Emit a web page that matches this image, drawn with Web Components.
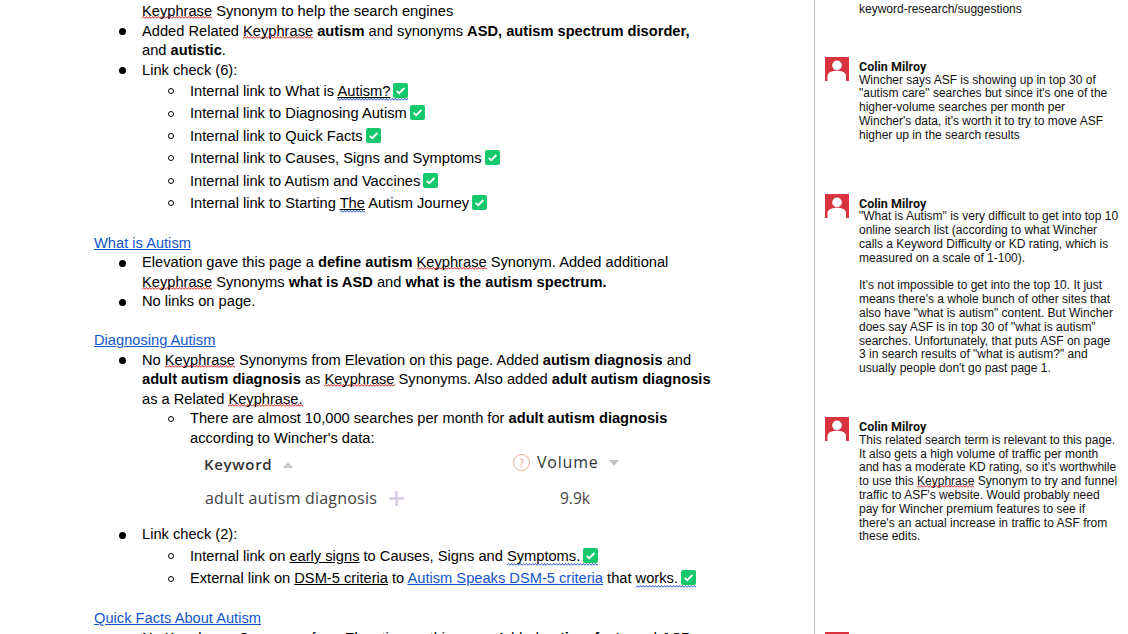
<!doctype html>
<html>
<head>
<meta charset="utf-8">
<title>Doc</title>
<style>
	html, body { margin: 0; height: 100%; overflow: hidden; background: #fff; }
	doc-section { margin-top: 19.5px; }
	doc-section:first-child { margin-top: 0; }
</style>
</head>
<body>
<review-page>
	<doc-section>
		<doc-item plain><spell-mark>Keyphrase</spell-mark> Synonym to help the search engines</doc-item>
		<doc-item>Added Related <spell-mark>Keyphrase</spell-mark> <b>autism</b> and synonyms <b>ASD, autism spectrum disorder,</b><br>and <b>autistic</b>.</doc-item>
		<doc-item>Link check (6):
			<doc-item tall sub>Internal link to What is <u-link><spell-mark kind="grammar">Autism?<check-mark></check-mark></spell-mark></u-link></doc-item>
			<doc-item tall sub>Internal link to Diagnosing Autism<check-mark></check-mark></doc-item>
			<doc-item tall sub>Internal link to Quick Facts<check-mark></check-mark></doc-item>
			<doc-item tall sub>Internal link to Causes, Signs and Symptoms<check-mark></check-mark></doc-item>
			<doc-item tall sub>Internal link to Autism and Vaccines<check-mark></check-mark></doc-item>
			<doc-item tall sub>Internal link to Starting <u-link><spell-mark kind="grammar">The</spell-mark></u-link> Autism Journey<check-mark></check-mark></doc-item>
		</doc-item>
	</doc-section>

	<doc-section heading="What is Autism">
		<doc-item>Elevation gave this page a <b>define autism</b> <spell-mark>Keyphrase</spell-mark> Synonym. Added additional<br><spell-mark>Keyphrase</spell-mark> Synonyms <b>what is ASD</b> and <b>what is the autism spectrum.</b></doc-item>
		<doc-item>No links on page.</doc-item>
	</doc-section>

	<doc-section heading="Diagnosing Autism">
		<doc-item>No <spell-mark>Keyphrase</spell-mark> Synonyms from Elevation on this page. Added <b>autism diagnosis</b> and<br><b>adult autism diagnosis</b> as <spell-mark>Keyphrase</spell-mark> Synonyms. Also added <b>adult autism diagnosis</b><br>as a Related <spell-mark>Keyphrase.</spell-mark>
			<doc-item sub>There are almost 10,000 searches per month for <b>adult autism diagnosis</b><br>according to Wincher's data:
				<keyword-table></keyword-table>
			</doc-item>
		</doc-item>
		<doc-item>Link check (2):
			<doc-item tall sub>Internal link on <u-link>early signs</u-link> to Causes, Signs and <spell-mark kind="grammar">Symptoms.<check-mark></check-mark></spell-mark></doc-item>
			<doc-item tall sub>External link on <u-link>DSM-5 criteria</u-link> to <u-link blue>Autism Speaks DSM-5 criteria</u-link> that <spell-mark kind="grammar">works.<check-mark></check-mark></spell-mark></doc-item>
		</doc-item>
	</doc-section>

	<doc-section heading="Quick Facts About Autism">
		<doc-item>No <spell-mark>Keyphrase</spell-mark> Synonyms from Elevation on this page. Added <b>autism facts</b> and <b>ASD</b></doc-item>
	</doc-section>

	<comment-card slot="comments" no-head style="margin-top:3px"><div>keyword-research/suggestions</div></comment-card>
	<comment-card slot="comments" name="Colin Milroy" style="margin-top:40px">Wincher says ASF is showing up in top 30 of<br>"autism care" searches but since it's one of the<br>higher-volume searches per month per<br>Wincher's data, it's worth it to try to move ASF<br>higher up in the search results</comment-card>
	<comment-card slot="comments" name="Colin Milroy" style="margin-top:51px">"What is Autism" is very difficult to get into top 10<br>online search list (according to what Wincher<br>calls a Keyword Difficulty or KD rating, which is<br>measured on a scale of 1-100).<br><br>It's not impossible to get into the top 10. It just<br>means there's a whole bunch of other sites that<br>also have "what is autism" content. But Wincher<br>does say ASF is in top 30 of "what is autism"<br>searches. Unfortunately, that puts ASF on page<br>3 in search results of "what is autism?" and<br>usually people don't go past page 1.</comment-card>
	<comment-card slot="comments" name="Colin Milroy" style="margin-top:41px">This related search term is relevant to this page.<br>It also gets a high volume of traffic per month<br>and has a moderate KD rating, so it's worthwhile<br>to use this <spell-mark>Keyphrase</spell-mark> Synonym to try and funnel<br>traffic to ASF's website. Would probably need<br>pay for Wincher premium features to see if<br>there's an actual increase in traffic to ASF from<br>these edits.</comment-card>
	<comment-card slot="comments" style="margin-top:88px"></comment-card>
</review-page>

<script>
const wave = color => `url("data:image/svg+xml,%3Csvg xmlns='http://www.w3.org/2000/svg' width='3' height='3'%3E%3Cpath d='M0 2.5L1.5 .5L3 2.5' fill='none' stroke='${color}' stroke-width='1'/%3E%3C/svg%3E")`

class ReviewPage extends HTMLElement {
	constructor() {
		super()
		this.attachShadow( { mode: 'open' } )
		this.shadowRoot.innerHTML = `
			<style>
				:host {
					display: grid;
					grid-template-columns: 814px 1fr;
					height: 634px;
					overflow: hidden;
					color: #000;
					font-family: "Liberation Sans", Arial, sans-serif;
				}
				.doc {
					padding: 2px 0 0 94px;
					font-size: 14.67px;
					overflow: hidden;
				}
				.rail {
					border-left: 1px solid #c2c2c2;
					padding: 0 0 0 10px;
					overflow: hidden;
				}
			</style>
			<div class="doc"><slot></slot></div>
			<div class="rail"><slot name="comments"></slot></div>
		`
	}
}

class DocSection extends HTMLElement {
	constructor() {
		super()
		this.attachShadow( { mode: 'open' } )
	}

	connectedCallback() {
		const heading = this.getAttribute( 'heading' )
		this.shadowRoot.innerHTML = `
			<style>
				:host { display: block; }
				.heading {
					line-height: 19.5px;
					color: #1155cc;
					text-decoration: underline;
				}
			</style>
			${ heading ? `<div class="heading">${heading}</div>` : '' }
			<slot></slot>
		`
	}
}

class DocItem extends HTMLElement {
	constructor() {
		super()
		this.attachShadow( { mode: 'open' } )
		this.shadowRoot.innerHTML = `
			<style>
				:host {
					--lh: 19.5px;
					display: grid;
					grid-template-columns: 48px 1fr;
					line-height: var(--lh);
				}
				:host([tall]) { --lh: 22.4px; }
				.mark {
					display: flex;
					align-items: center;
					height: var(--lh);
					padding-left: 25px;
				}
				.mark i {
					width: 7px;
					height: 7px;
					border-radius: 50%;
					background: #000;
				}
				:host([sub]) .mark i {
					width: 4px;
					height: 4px;
					margin-left: 1px;
					background: transparent;
					border: 1px solid #000;
				}
				:host([plain]) .mark i { visibility: hidden; }
			</style>
			<div class="mark"><i></i></div>
			<div><slot></slot></div>
		`
	}
}

class SpellMark extends HTMLElement {
	constructor() {
		super()
		this.attachShadow( { mode: 'open' } )
		// no whitespace around the slot, it would pick up the underline
		this.shadowRoot.innerHTML = `<style>
				:host {
					background: ${wave( '%23d92b2b' )} repeat-x left bottom;
				}
				:host([kind=grammar]) {
					padding-bottom: 2px;
					background-image: ${wave( '%232b5fd9' )};
				}
			</style><slot></slot>`
	}
}

class ULink extends HTMLElement {
	constructor() {
		super()
		this.attachShadow( { mode: 'open' } )
		this.shadowRoot.innerHTML = `<style>
				:host { text-decoration: underline; }
				:host([blue]) { color: #1155cc; }
			</style><slot></slot>`
	}
}

class CheckMark extends HTMLElement {
	constructor() {
		super()
		this.attachShadow( { mode: 'open' } )
		this.shadowRoot.innerHTML = `<style>
				:host {
					display: inline-block;
					width: 15px;
					height: 15px;
					margin-left: 3px;
					vertical-align: -2px;
				}
				svg { display: block; }
			</style><svg width="15" height="15" viewBox="0 0 15 15">
				<rect width="15" height="15" rx="2" fill="#15c76d"/>
				<path d="M3.6 7.8L6.2 10.2L11.4 5" fill="none" stroke="#fff" stroke-width="1.8"/>
			</svg>`
	}
}

class KeywordTable extends HTMLElement {
	constructor() {
		super()
		this.attachShadow( { mode: 'open' } )
		this.shadowRoot.innerHTML = `
			<style>
				:host {
					display: grid;
					grid-template-columns: 309px 120px;
					grid-template-rows: 36px 41px;
					margin: -1px 0 1px 14px;
					width: 429px;
					font-family: "Open Sans", sans-serif;
					color: #444;
				}
				.cell { display: flex; align-items: center; }
				.row2 { height: 30px; }
				.keyword {
					height: 15px;
					margin-bottom: 2px;
					overflow: hidden;
					font-size: 15px;
					font-weight: 600;
					letter-spacing: .7px;
					line-height: 15px;
					color: #333;
				}
				.volume {
					height: 30px;
					font-size: 16px;
					font-weight: 500;
					letter-spacing: .8px;
					color: #333;
				}
				.name { margin-left: 1px; font-size: 16px; line-height: 22px; letter-spacing: .2px; }
				.amount { padding-left: 47px; padding-bottom: 2px; font-size: 15.5px; }
				.up, .down { width: 0; height: 0; border: 5.5px solid transparent; }
				.up { margin: 0 0 0 11px; border-top: 0; border-bottom: 6px solid #c9c9c9; }
				.down { margin: 2px 0 0 10px; border-bottom: 0; border-top: 6px solid #c4c4c4; }
				.help {
					width: 15px;
					height: 15px;
					margin-right: 7px;
					border: 1px solid #f0a796;
					border-radius: 50%;
					color: #f0a796;
					font: 11px/15px "Open Sans", sans-serif;
					letter-spacing: 0;
					text-align: center;
				}
				svg { margin-left: 12px; }
			</style>
			<div class="cell"><span class="keyword">Keyword</span><i class="up"></i></div>
			<div class="cell volume"><span class="help">?</span>Volume<i class="down"></i></div>
			<div class="cell row2"><span class="name">adult autism diagnosis</span>
				<svg width="15" height="15" viewBox="0 0 15 15"><path d="M7.5 0V15M0 7.5H15" stroke="#d9c8e4" stroke-width="2.4"/></svg>
			</div>
			<div class="cell row2 amount">9.9k</div>
		`
	}
}

class CommentCard extends HTMLElement {
	constructor() {
		super()
		this.attachShadow( { mode: 'open' } )
	}

	connectedCallback() {
		const name = this.getAttribute( 'name' )
		const avatar = this.hasAttribute( 'no-head' ) ? '' : `
			<svg class="avatar" width="24" height="24" viewBox="0 0 24 24">
				<rect width="24" height="24" fill="#d8343f"/>
				<circle cx="12" cy="8.4" r="4.8" fill="#fff"/>
				<path d="M2.5 24V19C2.5 15.5 7 13.8 12 13.8S21 15.5 21 19V24Z" fill="#fff"/>
			</svg>`
		this.shadowRoot.innerHTML = `
			<style>
				:host {
					display: grid;
					grid-template-columns: 24px 1fr;
					column-gap: 10px;
					font-size: 12px;
					line-height: 13.8px;
					color: #111;
				}
				.avatar { display: block; }
				.body { grid-column: 2; }
				.avatar + .body { padding-top: 3px; }
				.name { font: 700 12.5px/13.8px Roboto, sans-serif; }
			</style>
			${avatar}
			<div class="body">
				${ name ? `<div class="name">${name}</div>` : '' }
				<slot></slot>
			</div>
		`
	}
}

customElements.define( 'review-page', ReviewPage )
customElements.define( 'doc-section', DocSection )
customElements.define( 'doc-item', DocItem )
customElements.define( 'spell-mark', SpellMark )
customElements.define( 'u-link', ULink )
customElements.define( 'check-mark', CheckMark )
customElements.define( 'keyword-table', KeywordTable )
customElements.define( 'comment-card', CommentCard )
</script>
</body>
</html>
